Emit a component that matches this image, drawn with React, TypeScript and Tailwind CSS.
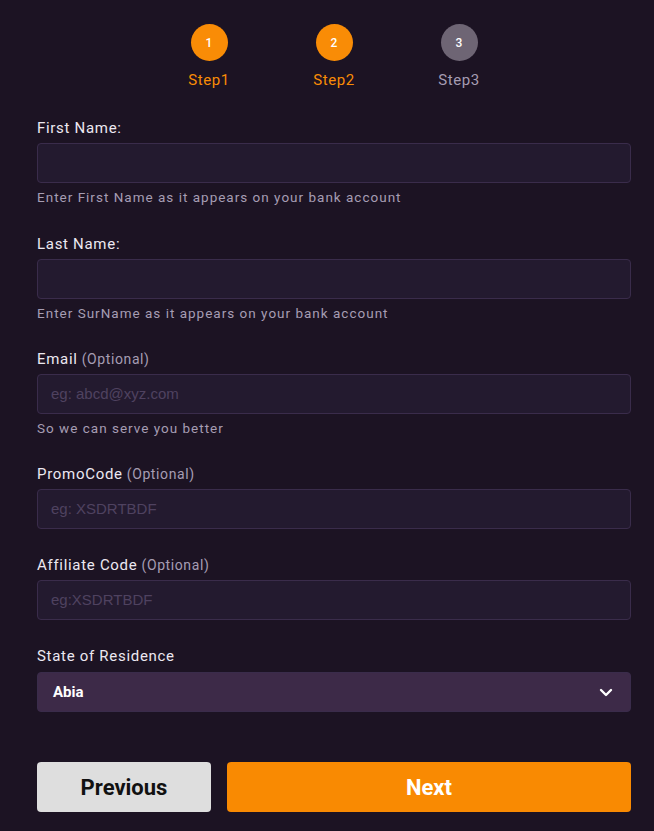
import React from "react";

const font = { fontFamily: "Roboto, 'Noto Sans', sans-serif" };

function Step({ n, active }: { n: number; active: boolean }) {
  return (
    <div className="flex w-[125px] flex-col items-center">
      <div
        className={`flex h-[37px] w-[37px] items-center justify-center rounded-full text-[12px] font-medium text-white ${
          active ? "bg-[#f98c06]" : "bg-[#6e6574]"
        }`}
      >
        {n}
      </div>
      <div
        className={`mt-[9px] text-[15px] leading-[20px] tracking-[0.6px] ${
          active ? "text-[#f98c06]" : "text-[#a59cb2]"
        }`}
      >
        Step{n}
      </div>
    </div>
  );
}

function Field({
  label,
  optional,
  placeholder,
  help,
  first,
}: {
  label: string;
  optional?: boolean;
  placeholder?: string;
  help?: string;
  first?: boolean;
}) {
  return (
    <div className={first ? "mb-[27px]" : "mb-[26px]"}>
      <div className="mb-[5px] text-[15px] leading-[20px] tracking-[0.7px] text-[#ece8f1]">
        {label}
        {optional && <span className="text-[14px] tracking-[0.6px] text-[#a69db3]"> (Optional)</span>}
      </div>
      <div className="flex h-[40px] items-center rounded-[4px] border border-[#3a2c4b] bg-[#231a2f] px-[13px]">
        {placeholder && (
          <span
            className="text-[15px] text-[#4f4260]"
            style={{ fontFamily: "'Liberation Sans', Arial, sans-serif" }}
          >
            {placeholder}
          </span>
        )}
      </div>
      {help && (
        <div className="mt-[4px] text-[13.5px] leading-[20px] tracking-[1px] text-[#a69db3]">{help}</div>
      )}
    </div>
  );
}

export default function App() {
  return (
    <div className="min-h-[831px] bg-[#1c1323] pl-[37px] pr-[23px] pt-[24px]" style={font}>
      <div className="flex justify-center">
        <Step n={1} active />
        <Step n={2} active />
        <Step n={3} active={false} />
      </div>
      <div className="mt-[28px]">
        <Field first label="First Name:" help="Enter First Name as it appears on your bank account" />
        <Field label="Last Name:" help="Enter SurName as it appears on your bank account" />
        <Field label="Email" optional placeholder="eg: abcd@xyz.com" help="So we can serve you better" />
        <Field label="PromoCode" optional placeholder="eg: XSDRTBDF" />
        <Field label="Affiliate Code" optional placeholder="eg:XSDRTBDF" />
        <div>
          <div className="mb-[6px] text-[15px] leading-[20px] tracking-[0.7px] text-[#ece8f1]">
            State of Residence
          </div>
          <div className="flex h-[40px] items-center justify-between rounded-[4px] border border-[#3a2c4b] bg-[#3d2a48] pl-[15px] pr-[17px]">
            <span className="text-[15px] font-bold text-white">Abia</span>
            <svg width="14" height="9" viewBox="0 0 14 9" fill="none">
              <path d="M2 2l5 5 5-5" stroke="white" strokeWidth="2.4" strokeLinecap="round" strokeLinejoin="round" />
            </svg>
          </div>
        </div>
        <div className="mt-[50px] flex gap-[16px]">
          <button className="h-[50px] w-[174px] rounded-[4px] bg-[#dedede] text-[22px] font-bold text-[#111]">
            Previous
          </button>
          <button className="h-[50px] flex-1 rounded-[4px] bg-[#f98a02] text-[22px] font-bold text-white">
            Next
          </button>
        </div>
      </div>
    </div>
  );
}
